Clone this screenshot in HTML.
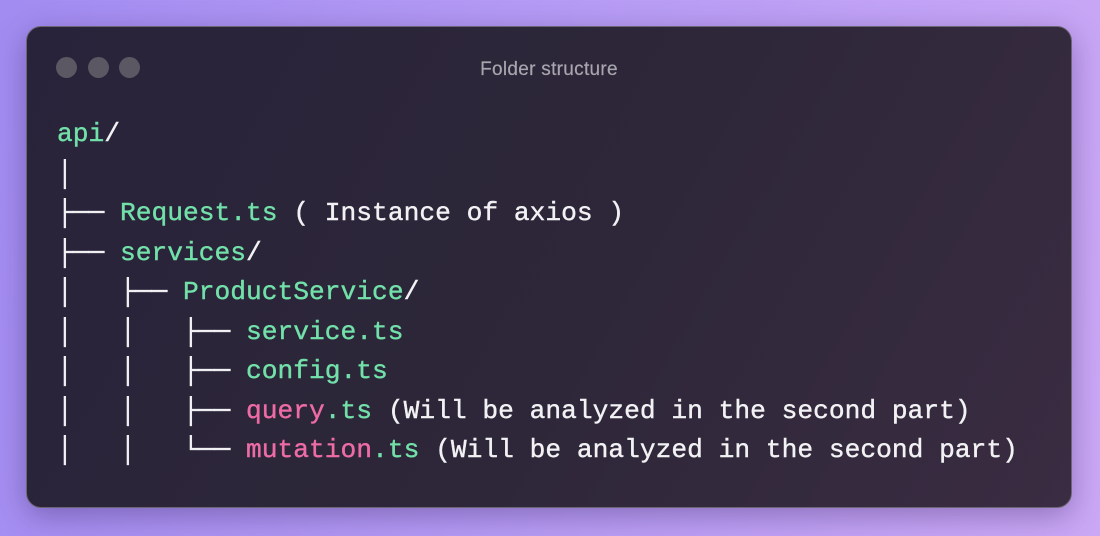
<!DOCTYPE html>
<html><head><meta charset="utf-8">
<style>
html,body{margin:0;padding:0;width:1100px;height:536px;overflow:hidden}
body{background:linear-gradient(100deg,#a28cf1 0%,#b79cf5 50%,#cba8f6 100%);position:relative}
.win{position:absolute;left:26px;top:26px;width:1046px;height:482px;border-radius:15px;
background:linear-gradient(120deg,#28233a 0%,#2e2739 55%,#3a2c42 100%);
border:1px solid #6c6573;box-shadow:0 8px 30px rgba(40,20,80,0.35);box-sizing:border-box}
.dot{position:absolute;top:30px;width:21px;height:21px;border-radius:50%;background:#5b5763}
.title{position:absolute;top:32px;left:0;right:0;text-align:center;font:19px/22px "Liberation Sans",sans-serif;color:#a8a5ae;letter-spacing:0.3px;-webkit-text-stroke:0.2px #a8a5ae}
pre{position:absolute;left:30px;top:88px;margin:0;font-family:"Liberation Mono","DejaVu Sans Mono",monospace;font-size:26.25px;line-height:39.5px;color:#f2f2f4;-webkit-text-stroke:0.4px currentColor}
.g{color:#72e0a9}.p{color:#ee6ca5}
</style></head><body>
<div class="win">
<div class="dot" style="left:29px"></div>
<div class="dot" style="left:61px"></div>
<div class="dot" style="left:92px"></div>
<div class="title">Folder structure</div>
<pre><span class="g">api</span>/
│
├── <span class="g">Request.ts</span> ( Instance of axios )
├── <span class="g">services</span>/
│   ├── <span class="g">ProductService</span>/
│   │   ├── <span class="g">service.ts</span>
│   │   ├── <span class="g">config.ts</span>
│   │   ├── <span class="p">query</span><span class="g">.ts</span> (Will be analyzed in the second part)
│   │   └── <span class="p">mutation</span><span class="g">.ts</span> (Will be analyzed in the second part)</pre>
</div>
</body></html>
